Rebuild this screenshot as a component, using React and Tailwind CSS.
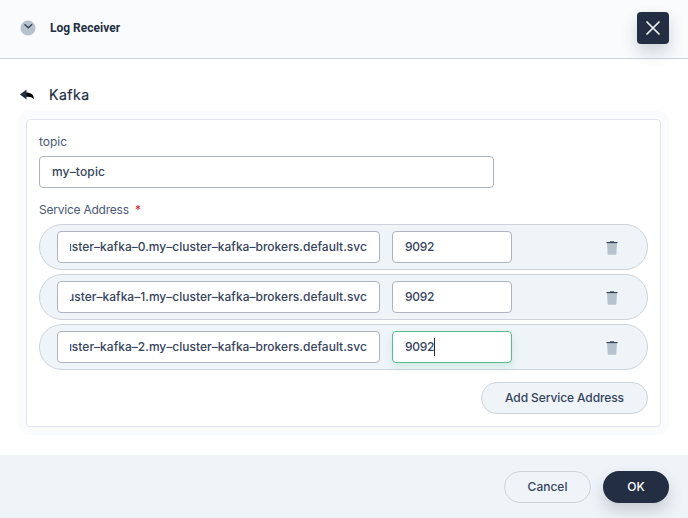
const inputBase =
  "flex h-8 shrink-0 items-center rounded-[4px] border bg-white px-3 text-xs font-medium text-[#36435c]";

const addresses = [
  { host: "my–cluster–kafka–0.my–cluster–kafka–brokers.default.svc", port: "9092" },
  { host: "my–cluster–kafka–1.my–cluster–kafka–brokers.default.svc", port: "9092" },
  { host: "my–cluster–kafka–2.my–cluster–kafka–brokers.default.svc", port: "9092", focused: true },
];

function TrashIcon() {
  return (
    <svg width="16" height="16" viewBox="0 0 16 16" className="shrink-0">
      <path d="M3 4h10l-.7 10.9a1 1 0 0 1-1 .9H4.7a1 1 0 0 1-1-.9z" fill="#b6c2cd" />
      <path d="M3 4h10v1H3z" fill="#a3b0bd" />
      <path d="M2.4 3h11.2v1H2.4z" fill="#36435c" />
      <path d="M6 2h4v1H6z" fill="#6f7c8d" />
    </svg>
  );
}

function AddressRow({ host, port, focused }) {
  return (
    <div className="flex h-[46px] items-center rounded-full border border-[#ccd3db] bg-[#eff4f9] pl-[17px] pr-[27px]">
      <div className={`${inputBase} w-[323px] border-[#abb4be]`}>
        <div className="flex w-full justify-end overflow-hidden">
          <span className="whitespace-nowrap tracking-[0.02px]">{host}</span>
        </div>
      </div>
      <div
        className={`${inputBase} ml-3 w-[120px] ${
          focused ? "border-[#55bc8a] shadow-[0_4px_8px_rgba(85,188,138,0.2)]" : "border-[#abb4be]"
        }`}
      >
        <span className="tracking-[-0.3px]">{port}</span>
        {focused && <span className="h-[18px] w-px bg-[#242e42]" />}
      </div>
      <div className="ml-auto">
        <TrashIcon />
      </div>
    </div>
  );
}

export default function App() {
  return (
    <div className="flex h-[518px] w-[688px] flex-col overflow-hidden bg-white font-[Inter,'Liberation_Sans',sans-serif] text-xs text-[#36435c]">
      <header className="flex h-[59px] shrink-0 items-start border-b border-[#ccd3db] bg-[#f9fbfd] pl-5 pr-[19px] pt-3">
        <svg width="16" height="16" viewBox="0 0 16 16" className="mt-2">
          <circle cx="8" cy="8" r="7.6" fill="#b6c2cd" />
          <path d="m4.5 4.2 3.8 3.6 3.8-3.6" fill="none" stroke="#36435c" strokeWidth="1.3" />
        </svg>
        <h1 className="ml-[14px] mt-1.5 font-[Roboto,sans-serif] text-xs font-bold leading-5 text-[#242e42]">Log Receiver</h1>
        <button className="ml-auto flex size-8 items-center justify-center rounded-[4px] bg-[#242e42] shadow-[0_8px_16px_rgba(36,46,66,0.2)]">
          <svg width="16" height="16" viewBox="0 0 16 16" stroke="#eff4f9" strokeWidth="1.7">
            <path d="m1.5 1.5 13 13m0-13-13 13" />
          </svg>
        </button>
      </header>

      <main className="flex flex-1 flex-col pl-[26px] pr-[27px]">
        <div className="-ml-1.5 mt-[26px] flex h-5 items-center">
          <svg width="15" height="14" viewBox="0 0 15 14">
            <path d="M6 4.6c5 0 8 2 7.9 6.9C12.4 9.3 10 8.7 6 8.9z" fill="#050608" />
            <path d="M0 6.6 6.5 1.6v10z" fill="#242e42" />
          </svg>
          <h2 className="ml-[14px] text-sm leading-5 tracking-[0.55px] text-[#242e42] [-webkit-text-stroke:0.2px_#242e42]">Kafka</h2>
        </div>

        <section className="mt-[14px] flex h-[308px] flex-col rounded-[4px] border border-[#dfe4ee] bg-white px-3 shadow-[0_0_0_8px_#f9fbfd]">
          <label className="mt-3 leading-5 text-[#4a5974]">topic</label>
          <div className={`${inputBase} mt-1 w-[455px] border-[#abb4be] tracking-[0.15px]`}>my–topic</div>
          <label className="mt-3 leading-5 tracking-[-0.23px] text-[#4a5974]">
            Service Address <span className="ml-[3px] text-[#ca2621]">*</span>
          </label>
          <div className="mt-1 flex flex-col gap-1">
            {addresses.map((address) => (
              <AddressRow key={address.host} {...address} />
            ))}
          </div>
          <button className="mt-3 flex h-8 w-[167px] items-center justify-center self-end rounded-full border border-[#ccd3db] bg-[#eff4f9] font-medium tracking-[-0.1px]">
            Add Service Address
          </button>
        </section>
      </main>

      <footer className="flex h-[63px] shrink-0 items-start justify-end gap-3 bg-[#eff4f9] pr-[19px] pt-4">
        <button className="h-8 w-[87px] rounded-full border border-[#ccd3db] font-medium">Cancel</button>
        <button className="h-8 w-[66px] rounded-full bg-[#242e42] font-medium text-white shadow-[0_8px_16px_rgba(36,46,66,0.2)]">
          OK
        </button>
      </footer>
    </div>
  );
}
